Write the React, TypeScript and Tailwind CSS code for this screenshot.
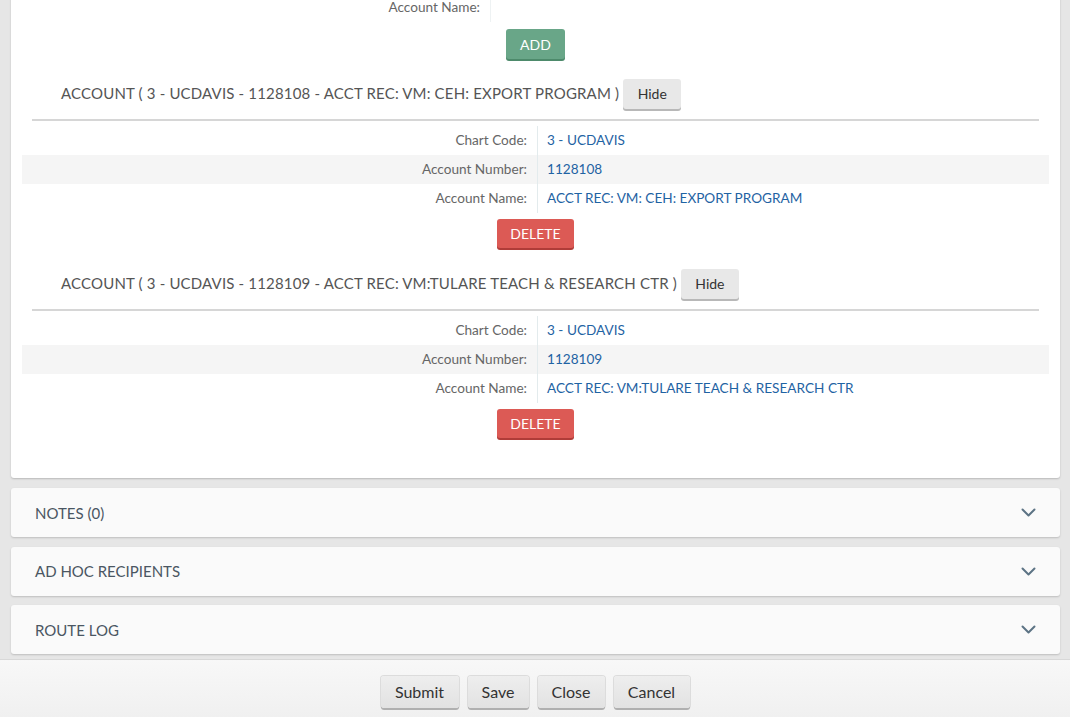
import React from "react";

const font = { fontFamily: "Lato, 'Open Sans', 'Noto Sans', sans-serif" };

function Row({ label, value, striped }: { label: string; value: string; striped?: boolean }) {
  return (
    <div className={`flex h-[29px] items-center ${striped ? "bg-[#f5f5f5]" : ""}`}>
      <div className="w-[515px] shrink-0 pr-[10px] text-right text-[13.6px] text-[#666]">{label}</div>
      <div className="flex h-full items-center border-l border-[#e3ebed] pl-[9px] text-[13.6px] text-[#1f63a3]">{value}</div>
    </div>
  );
}

function AccountBlock({ title, code, num, name }: { title: string; code: string; num: string; name: string }) {
  return (
    <div>
      <div className="flex h-[30px] items-center pl-[50px]">
        <span className="-mt-[1px] text-[15px] tracking-[0.17px] text-[#555]">{title}</span>
        <button className="ml-[4px] -mt-[1px] h-[30px] w-[58px] rounded-[3px] bg-[#e8e8e8] text-[14px] text-[#333] shadow-[0_2px_0_#b8b8b8]">
          Hide
        </button>
      </div>
      <div className="mx-[21px] mt-[10px] h-[2px] bg-[#d6d6d6]" />
      <div className="mx-[11px] mt-[5px]">
        <Row label="Chart Code:" value={code} />
        <Row label="Account Number:" value={num} striped />
        <Row label="Account Name:" value={name} />
      </div>
      <div className="mt-[6px] flex justify-center">
        <button className="h-[29px] w-[77px] rounded-[3px] bg-[#dc5a55] text-[14px] text-white shadow-[0_2px_0_#b03c38]">
          DELETE
        </button>
      </div>
    </div>
  );
}

function Chevron() {
  return (
    <svg width="15" height="9" viewBox="0 0 15 9" fill="none">
      <path d="M1.5 1.5 L7.5 7.5 L13.5 1.5" stroke="#5c7384" strokeWidth="2" strokeLinecap="round" strokeLinejoin="round" />
    </svg>
  );
}

function Panel({ title }: { title: string }) {
  return (
    <div className="flex h-[49px] items-center justify-between rounded-[3px] bg-[#fafafa] pl-[24px] pr-[24px] shadow-[0_1px_2px_rgba(0,0,0,0.18)]">
      <span className="mt-[1px] text-[15px] text-[#4a5662]">{title}</span>
      <Chevron />
    </div>
  );
}

function FooterButton({ label, w }: { label: string; w: string }) {
  return (
    <button
      className={`h-[32px] ${w} rounded-[3px] bg-gradient-to-b from-[#eeeeee] to-[#e2e2e2] text-[16px] text-[#333] shadow-[0_2px_0_#b0b0b0,0_0_0_1px_#dcdcdc]`}
    >
      {label}
    </button>
  );
}

export default function App() {
  return (
    <div style={font} className="flex h-[717px] w-[1070px] flex-col overflow-hidden bg-[#e6e6e6]">
      <div className="ml-[11px] mr-[10px] -mt-[7px] flex flex-col">
        <div className="rounded-b-[3px] bg-white pb-[40px] shadow-[0_1px_2px_rgba(0,0,0,0.2)]">
          <div className="mx-[11px] flex h-[29px] items-center">
            <div className="w-[468px] shrink-0 pr-[10px] text-right text-[13.6px] text-[#666]">Account Name:</div>
            <div className="h-full border-l border-[#eef2f3]" />
          </div>
          <div className="mt-[7px] flex justify-center">
            <button className="h-[30px] w-[59px] rounded-[3px] bg-[#69a688] text-[14px] text-white shadow-[0_2px_0_#4d8a6b]">
              ADD
            </button>
          </div>
          <div className="mt-[20px]">
            <AccountBlock
              title="ACCOUNT ( 3 - UCDAVIS - 1128108 - ACCT REC: VM: CEH: EXPORT PROGRAM )"
              code="3 - UCDAVIS"
              num="1128108"
              name="ACCT REC: VM: CEH: EXPORT PROGRAM"
            />
          </div>
          <div className="mt-[21px]">
            <AccountBlock
              title="ACCOUNT ( 3 - UCDAVIS - 1128109 - ACCT REC: VM:TULARE TEACH & RESEARCH CTR )"
              code="3 - UCDAVIS"
              num="1128109"
              name="ACCT REC: VM:TULARE TEACH & RESEARCH CTR"
            />
          </div>
        </div>
        <div className="mt-[10px] flex flex-col gap-[9.5px]">
          <Panel title="NOTES (0)" />
          <Panel title="AD HOC RECIPIENTS" />
          <Panel title="ROUTE LOG" />
        </div>
      </div>
      <div className="mt-[5px] flex flex-1 items-start justify-center gap-[9px] border-t border-[#d8d8d8] bg-gradient-to-b from-[#f8f8f8] to-[#f0f0f0] pt-[16px]">
        <FooterButton label="Submit" w="w-[78px]" />
        <FooterButton label="Save" w="w-[61px]" />
        <FooterButton label="Close" w="w-[67px]" />
        <FooterButton label="Cancel" w="w-[76px]" />
      </div>
    </div>
  );
}
